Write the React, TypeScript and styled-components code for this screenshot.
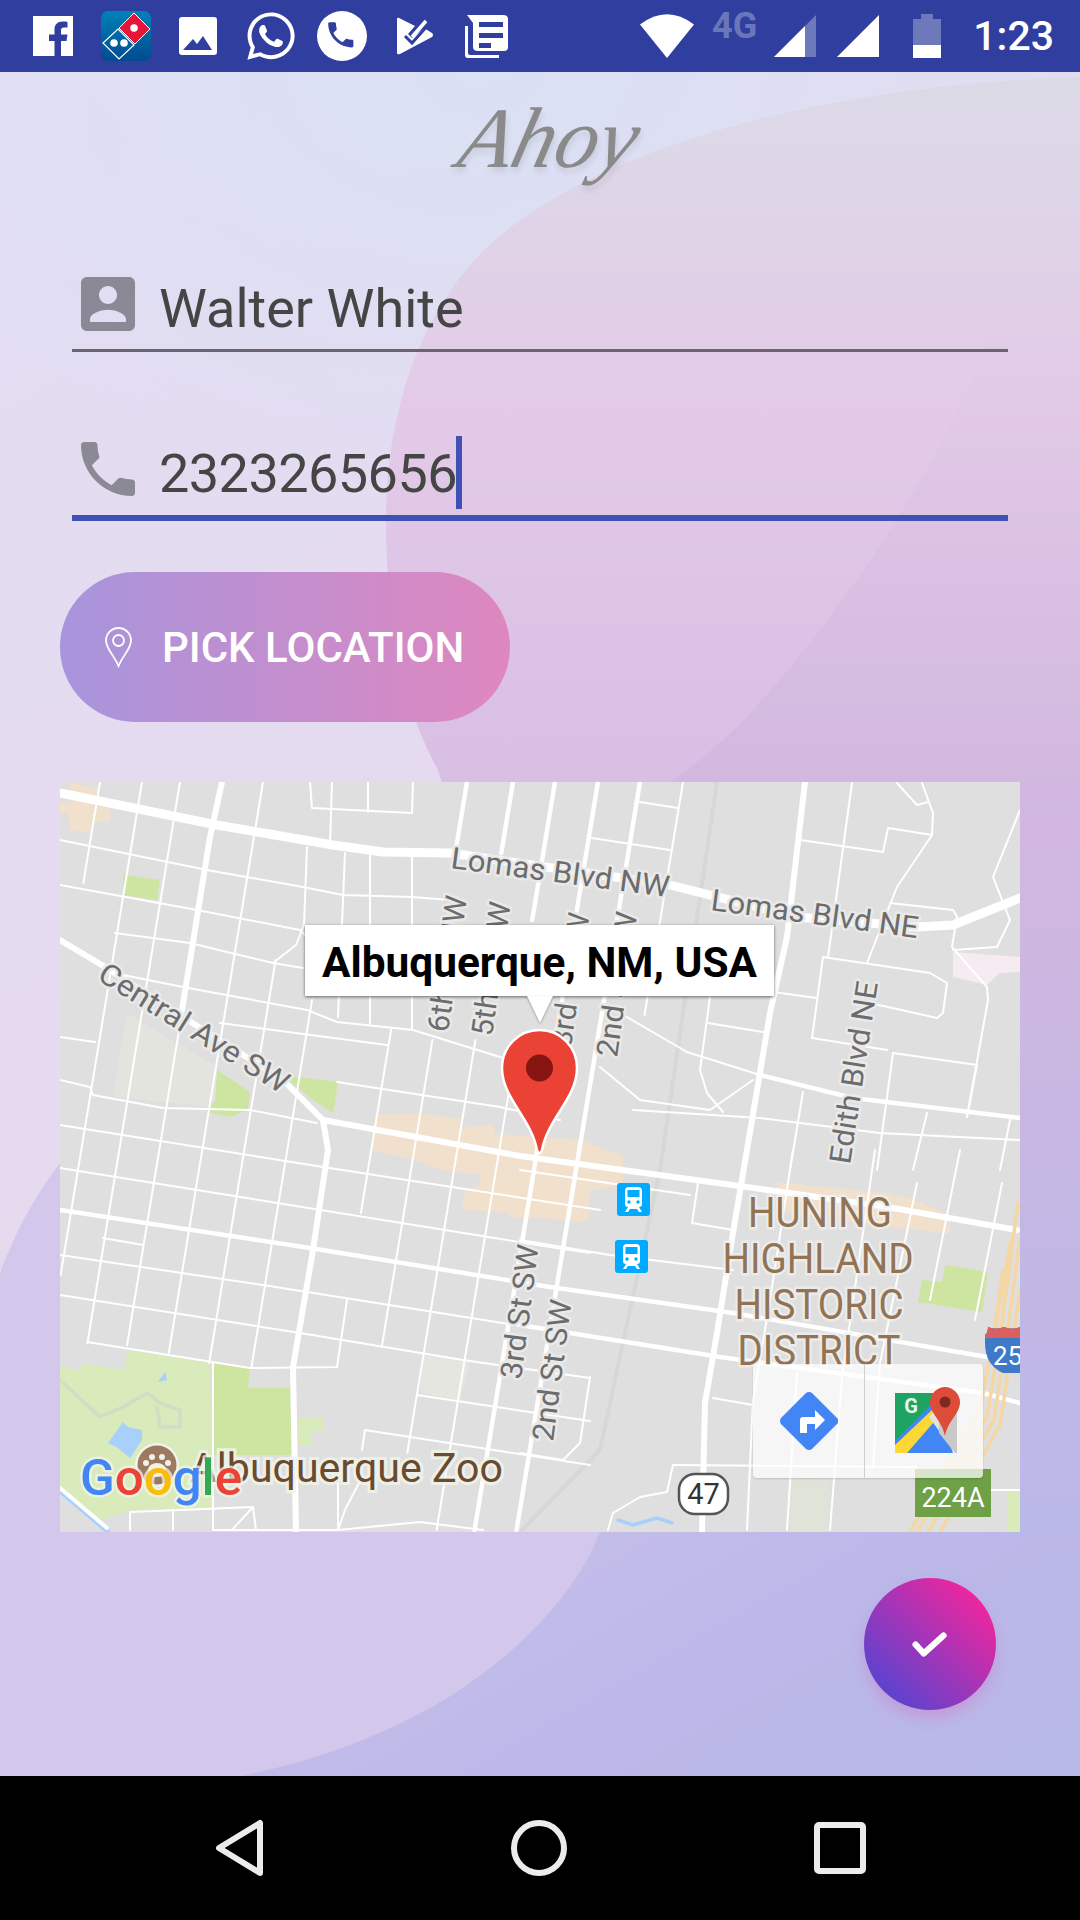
import React from "react";
import styled, { createGlobalStyle } from "styled-components";
import { FaWhatsapp } from "react-icons/fa";

const GlobalStyle = createGlobalStyle`
  html, body { margin: 0; padding: 0; background: #000; }
  * { box-sizing: border-box; }
`;

const BAR_BLUE = "#303f9f";

const Page = styled.div`
  width: 1080px;
  height: 1920px;
  display: flex;
  flex-direction: column;
  overflow: hidden;
  font-family: Roboto, "Liberation Sans", sans-serif;
`;

const StatusBar = styled.div`
  height: 72px;
  flex: none;
  display: flex;
  align-items: center;
  justify-content: space-between;
  background: ${BAR_BLUE};
  padding: 0 26px 0 33px;
  color: #fff;
`;

const StatusGroup = styled.div`
  display: flex;
  align-items: center;
`;

const StatusSlot = styled.span<{ $gap: number }>`
  display: flex;
  margin-left: ${(p) => p.$gap}px;
`;

const NetworkLabel = styled.span`
  font-size: 36px;
  font-weight: 700;
  line-height: 36px;
  color: rgba(255, 255, 255, 0.3);
  margin: -20px 0 0 18px;
`;

const Clock = styled.span`
  font-size: 41px;
  font-weight: 500;
  line-height: 44px;
  margin-left: 32px;
`;

const Screen = styled.main`
  position: relative;
  flex: 1;
  display: flex;
  flex-direction: column;
  padding: 0 60px;
  background:
    radial-gradient(ellipse 620px 420px at 480px 0, #dae1f4 0%, rgba(218, 225, 244, 0) 100%),
    linear-gradient(150deg, #e1def3 0%, #e6daef 50%, #ccc2e9 68%, #bcb8e9 86%, #b8b8e8 100%);
`;

const Backdrop = styled.svg`
  position: absolute;
  left: 0;
  top: 0;
  width: 1080px;
  height: 1704px;
`;

const TitleBox = styled.div`
  position: relative;
  height: 198px;
  flex: none;
  display: flex;
  justify-content: center;
  padding-top: 14px;
`;

const Title = styled.div`
  font-family: "Liberation Serif", serif;
  font-style: italic;
  font-size: 86px;
  line-height: 104px;
  color: #8a8a8a;
  transform: skewX(-14deg);
  text-shadow: 2px 5px 6px rgba(0, 0, 0, 0.1);
`;

const Field = styled.div<{ $focused?: boolean }>`
  position: relative;
  flex: none;
  display: flex;
  align-items: center;
  margin: ${(p) => (p.$focused ? "83px 12px 0" : "0 12px")};
  height: ${(p) => (p.$focused ? 86 : 82)}px;
  padding-left: 9px;
  border-bottom: ${(p) => (p.$focused ? "6px solid #3f51b5" : "3px solid #6b6470")};
`;

const FieldIcon = styled.svg`
  width: 54px;
  height: 54px;
  flex: none;
  fill: #8b8996;
  margin-top: -12px;
`;

const FieldText = styled.span<{ $tight?: boolean }>`
  font-size: 54px;
  line-height: 60px;
  color: #454545;
  letter-spacing: ${(p) => (p.$tight ? "-0.55px" : "normal")};
  margin: -2px 0 0 24px;
`;

const Caret = styled.span`
  width: 6px;
  height: 73px;
  flex: none;
  background: #3f51b5;
  margin: -6px 0 0 -1px;
`;

const PickButton = styled.button`
  position: relative;
  flex: none;
  width: 450px;
  height: 150px;
  margin-top: 51px;
  padding: 0 0 0 45px;
  display: flex;
  align-items: center;
  gap: 30px;
  border: 0;
  border-radius: 75px;
  background: linear-gradient(90deg, #a795dd 0%, #df87bf 100%);
  color: #fff;
  font-family: inherit;
  font-size: 42px;
  font-weight: 500;
`;

const MapBox = styled.div`
  position: relative;
  flex: none;
  width: 960px;
  height: 750px;
  margin-top: 60px;
  overflow: hidden;
  background: #dfdfdf;
`;

const MapCanvas = styled.svg`
  display: block;
  width: 960px;
  height: 750px;
  font-family: Roboto, sans-serif;
`;

const RoadLabel = styled.text`
  font-size: 30px;
  fill: #6c6c6c;
  stroke: #e9e9e9;
  stroke-width: 5px;
  paint-order: stroke;
  stroke-linejoin: round;
`;

const DistrictLabel = styled.text`
  font-size: 42px;
  fill: #927455;
  stroke: rgba(240, 240, 240, 0.75);
  stroke-width: 5px;
  paint-order: stroke;
  text-anchor: middle;
`;

const ZooLabel = styled.text`
  font-size: 40px;
  fill: #6b4a2f;
  stroke: rgba(240, 244, 232, 0.85);
  stroke-width: 6px;
  paint-order: stroke;
`;

const GoogleMark = styled.text`
  font-size: 50px;
  font-weight: 500;
  stroke: rgba(240, 244, 232, 0.75);
  stroke-width: 5px;
  paint-order: stroke;
  stroke-linejoin: round;
`;

const InfoWindow = styled.div`
  position: absolute;
  left: 245px;
  top: 143px;
  width: 469px;
  height: 71px;
  padding-top: 3px;
  display: flex;
  align-items: center;
  justify-content: center;
  background: #fff;
  box-shadow: 0 1px 3px rgba(0, 0, 0, 0.55);
  color: #000;
  font-size: 42.4px;
  font-weight: 700;
  white-space: nowrap;

  &::after {
    content: "";
    position: absolute;
    left: 222px;
    top: 71px;
    border-style: solid;
    border-width: 27px 13px 0;
    border-color: #fff transparent transparent;
    filter: drop-shadow(0 1px 1px rgba(0, 0, 0, 0.35));
  }
`;

const MapToolbar = styled.div`
  position: absolute;
  right: 37px;
  bottom: 54px;
  width: 230px;
  height: 114px;
  display: flex;
  border-radius: 4px;
  background: rgba(255, 255, 255, 0.72);
  box-shadow: 0 1px 2px rgba(0, 0, 0, 0.15);
`;

const ToolbarCell = styled.div`
  flex: 1;
  display: flex;
  align-items: center;
  justify-content: center;
  overflow: visible;

  & + & {
    border-left: 1px solid #d0d0d0;
    padding: 2px 0 0 7px;
  }
`;

const Fab = styled.button`
  align-self: flex-end;
  flex: none;
  width: 132px;
  height: 132px;
  margin: 46px 24px 0 0;
  padding: 0;
  border: 0;
  border-radius: 50%;
  display: flex;
  align-items: center;
  justify-content: center;
  background: linear-gradient(45deg, #5345d2 10%, #f1259e 88%);
  box-shadow: 0 8px 14px rgba(214, 100, 190, 0.35);
`;

const NavBar = styled.nav`
  height: 144px;
  flex: none;
  display: flex;
  align-items: center;
  background: #000;
  padding-left: 214px;
  gap: 246px;
`;

// ---- map data, in screen coordinates (the canvas viewBox starts at 60,782) ----

type Pt = [number, number];

const vLine = (x0: number, y1: number, y2: number): Pt[] => [
  [x0 - 0.165 * (y1 - 782), y1],
  [x0 - 0.165 * (y2 - 782), y2],
];

const toPoints = (pts: Pt[]) => pts.map((p) => p.join(",")).join(" ");

const thinRoads: Pt[][] = [
  vLine(100, 782, 883),
  vLine(142, 782, 1275),
  vLine(180, 782, 1343),
  vLine(220, 1010, 1345),
  vLine(263, 782, 1353),
  vLine(305, 960, 1363),
  vLine(348, 1000, 1368),
  vLine(432, 1030, 1213),
  vLine(475, 1040, 1347),
  vLine(518, 1040, 1453),
  vLine(560, 1040, 1530),
  vLine(683, 782, 1015),
  [[307, 847], [304, 925], [296, 945], [273, 963]],
  [[332, 782], [330, 845]],
  [[368, 782], [368, 812]],
  [[413, 782], [412, 813]],
  [[345, 853], [338, 1017]],
  [[370, 853], [370, 1023]],
  [[412, 853], [412, 1030]],
  [[310, 782], [312, 808], [412, 813]],
  [[60, 840], [207, 870], [303, 887], [343, 895], [412, 897], [450, 900]],
  [[60, 885], [197, 910], [300, 930], [305, 935]],
  [[115, 933], [190, 943], [273, 963], [303, 968]],
  [[113, 973], [183, 987], [307, 1010], [337, 1022], [413, 1030], [500, 1057], [540, 1068]],
  [[220, 1023], [387, 1045]],
  [[60, 1037], [95, 1042]],
  [[60, 1080], [90, 1087], [93, 1095], [163, 1108], [250, 1110], [317, 1123]],
  [[337, 1082], [500, 1107], [560, 1120]],
  [[60, 1125], [323, 1167], [600, 1210]],
  [[60, 1168], [550, 1247], [590, 1253]],
  [[103, 1238], [143, 1245]],
  [[60, 1255], [263, 1285], [440, 1313], [590, 1337]],
  [[60, 1295], [300, 1333], [463, 1360], [590, 1378]],
  [[87, 1342], [250, 1368], [337, 1367], [347, 1300]],
  [[417, 1395], [590, 1421]],
  [[365, 1430], [590, 1465]],
  [[365, 1430], [362, 1450]],
  [[213, 1363], [213, 1530]],
  [[130, 1512], [130, 1530]],
  [[130, 1512], [253, 1507], [232, 1530]],
  [[173, 1510], [173, 1530]],
  [[253, 1507], [256, 1530]],
  [[338, 1483], [338, 1530], [345, 1510], [362, 1477]],
  [[213, 1530], [338, 1530], [420, 1522], [483, 1530]],
  [[592, 838], [670, 850]],
  [[640, 802], [678, 808]],
  [[800, 840], [883, 852], [888, 828], [932, 835], [933, 813], [922, 783]],
  [[897, 783], [917, 805], [928, 802]],
  [[852, 783], [828, 957]],
  [[890, 903], [953, 910], [957, 917], [952, 947], [987, 987], [988, 1000], [967, 1117]],
  [[823, 957], [930, 973], [947, 983], [943, 1013], [937, 1018], [870, 1003]],
  [[823, 957], [812, 1038], [887, 1050]],
  [[893, 1053], [977, 1065], [967, 1117]],
  [[893, 1053], [877, 1170]],
  [[932, 835], [897, 887], [867, 963]],
  [[773, 992], [817, 998]],
  [[710, 997], [700, 1070], [707, 1093], [723, 1112]],
  [[708, 1023], [763, 1032]],
  [[620, 1013], [687, 1052], [760, 1075]],
  [[600, 1067], [640, 1100], [710, 1110], [753, 1080]],
  [[633, 1110], [760, 1118], [880, 1133], [1020, 1140]],
  [[803, 1092], [790, 1170]],
  [[927, 1113], [913, 1170]],
  [[1010, 1120], [1000, 1170]],
  [[1020, 810], [993, 877], [1010, 920], [997, 947], [953, 950]],
  [[793, 1150], [770, 1300], [753, 1400], [747, 1530]],
  [[875, 1150], [842, 1377], [830, 1530]],
  [[917, 1183], [880, 1363], [873, 1467]],
  [[960, 1150], [930, 1300]],
  [[1002, 1183], [975, 1320]],
  [[797, 1373], [787, 1530]],
  [[698, 1183], [692, 1223], [733, 1230]],
  [[520, 1170], [690, 1195]],
  [[520, 1240], [610, 1255], [733, 1270]],
  [[713, 1398], [753, 1405]],
  [[673, 1465], [917, 1467]],
  [[673, 1465], [667, 1492], [640, 1497], [613, 1513], [608, 1530]],
  [[950, 1490], [1020, 1490]],
  [[590, 1377], [580, 1443], [563, 1460], [520, 1453]],
];

const mediumRoads: Pt[][] = [
  vLine(467, 782, 853),
  vLine(513, 782, 853),
  vLine(555, 782, 920),
  vLine(598, 782, 1530),
  vLine(640, 782, 1530),
  [[760, 1075], [853, 1098], [1020, 1118]],
  [[60, 1210], [310, 1248], [550, 1287], [733, 1313], [987, 1357], [1020, 1363]],
  [[520, 1325], [720, 1357], [983, 1393], [1020, 1403]],
];

const majorRoads: Pt[][] = [
  [[222, 782], [210, 837], [182, 1010]],
  [[60, 940], [110, 970], [183, 1017], [283, 1080], [323, 1120]],
  [[323, 1120], [520, 1156], [747, 1187], [887, 1207], [1017, 1230]],
  [[323, 1120], [328, 1150], [313, 1250], [293, 1367], [296, 1532]],
  [[805, 782], [787, 937], [770, 1013], [733, 1233], [717, 1333], [705, 1403], [702, 1532]],
];

const freewayLanes: Pt[][] = [
  [[1018, 1203], [1000, 1337], [987, 1417], [917, 1532]],
  [[1020, 1240], [1006, 1340], [994, 1420], [928, 1532]],
  [[1011, 1240], [992, 1345], [980, 1410], [910, 1532]],
  [[1020, 1290], [1012, 1345], [1000, 1425], [940, 1532]],
  [[1003, 1270], [993, 1340]],
];

const blocks: { fill: string; pts: Pt[] }[] = [
  { fill: "#f1e0cc", pts: [[70, 783], [98, 788], [93, 807], [110, 808], [109, 822], [92, 822], [90, 833], [70, 830], [68, 813], [60, 813], [60, 802], [70, 803]] },
  { fill: "#f1e0cc", pts: [[375, 1115], [418, 1113], [460, 1119], [460, 1128], [493, 1124], [495, 1134], [580, 1140], [623, 1156], [623, 1185], [590, 1190], [588, 1222], [540, 1218], [510, 1217], [510, 1213], [462, 1210], [465, 1190], [480, 1185], [480, 1175], [440, 1170], [415, 1160], [372, 1150]] },
  { fill: "#f1e0cc", pts: [[777, 1182], [887, 1193], [910, 1198], [950, 1215], [950, 1233], [887, 1227], [777, 1210]] },
  { fill: "#f5ebf0", pts: [[953, 952], [1020, 957], [1020, 972], [1000, 973], [987, 985], [953, 977]] },
  { fill: "#cee5a2", pts: [[123, 875], [160, 880], [157, 900], [123, 895]] },
  { fill: "#cee5a2", pts: [[217, 1070], [250, 1092], [248, 1110], [230, 1117], [207, 1112], [215, 1100]] },
  { fill: "#cee5a2", pts: [[283, 1075], [338, 1082], [333, 1113], [310, 1098]] },
  { fill: "#e3e4de", pts: [[127, 1013], [217, 1067], [215, 1100], [207, 1107], [173, 1103], [113, 1097]] },
  { fill: "#cee5a2", pts: [[945, 1265], [988, 1272], [982, 1312], [918, 1302], [922, 1280], [942, 1282]] },
  { fill: "#d9eabb", pts: [[60, 1367], [80, 1370], [83, 1363], [125, 1370], [127, 1350], [210, 1363], [213, 1508], [133, 1510], [100, 1520], [60, 1490]] },
  { fill: "#cee5a2", pts: [[213, 1363], [250, 1368], [248, 1388], [290, 1388], [292, 1455], [213, 1455]] },
  { fill: "#d9eabb", pts: [[298, 1418], [323, 1418], [323, 1432], [312, 1432], [312, 1445], [297, 1445]] },
  { fill: "#e5e6df", pts: [[423, 1355], [470, 1362], [460, 1400], [420, 1393]] },
  { fill: "#e0e3d8", pts: [[790, 1478], [830, 1480], [828, 1532], [790, 1532]] },
  { fill: "#d9eabb", pts: [[1007, 1492], [1020, 1492], [1020, 1532], [1007, 1532]] },
  { fill: "#a9d0fb", pts: [[108, 1443], [123, 1422], [128, 1427], [142, 1430], [142, 1440], [130, 1458], [118, 1448]] },
  { fill: "#a9d0fb", pts: [[158, 1382], [165, 1372], [167, 1380]] },
];

function Transit({ x, y }: { x: number; y: number }) {
  return (
    <g transform={`translate(${x} ${y})`}>
      <rect width="33" height="33" rx="3" fill="#00aaff" />
      <path d="M8 8q0-4 4-4h9q4 0 4 4v13q0 3-3 3H11q-3 0-3-3z" fill="#fff" />
      <rect x="10.5" y="7" width="12" height="7" fill="#00aaff" />
      <circle cx="12" cy="19" r="1.7" fill="#00aaff" />
      <circle cx="21" cy="19" r="1.7" fill="#00aaff" />
      <path d="M11 24l-3 5h3l2-3h7l2 3h3l-3-5z" fill="#fff" />
    </g>
  );
}

function MapDrawing() {
  return (
    <MapCanvas viewBox="60 782 960 750">
      <rect x="60" y="782" width="960" height="750" fill="#dfdfdf" />
      {blocks.map((b, i) => (
        <polygon key={i} points={toPoints(b.pts)} fill={b.fill} />
      ))}
      <g fill="none" strokeLinejoin="round" strokeLinecap="round">
        <polyline points="60,1380 100,1417 123,1407 147,1393 160,1403 180,1410 180,1427 160,1427 157,1407" stroke="#d3dcc4" strokeWidth="3.5" />
        <polyline points="618,1520 633,1525 657,1518 672,1523" stroke="#a9d0fb" strokeWidth="3.5" />
        <polyline points="717,782 660,1170 600,1450 520,1532" stroke="#d7d7d7" strokeWidth="4" />
        {thinRoads.map((r, i) => (
          <polyline key={i} points={toPoints(r)} stroke="#fff" strokeWidth="2" />
        ))}
        <polyline points="60,1490 107,1530" stroke="#a9d0fb" strokeWidth="6" />
        <polyline points="60,1488 107,1528" stroke="#fff" strokeWidth="4" />
        {mediumRoads.map((r, i) => (
          <polyline key={i} points={toPoints(r)} stroke="#fff" strokeWidth="4.5" />
        ))}
        {majorRoads.map((r, i) => (
          <polyline key={i} points={toPoints(r)} stroke="#fff" strokeWidth="6" />
        ))}
        <polyline points="60,793 217,825 333,845 383,852 450,853 670,885 797,917 917,927 953,925 1020,898" stroke="#fff" strokeWidth="9" />
        {freewayLanes.map((r, i) => (
          <polyline key={i} points={toPoints(r)} stroke="#f5d7a4" strokeWidth="3.5" />
        ))}
      </g>

      <RoadLabel x="450" y="868" textLength="220" lengthAdjust="spacingAndGlyphs" transform="rotate(7.6 450 868)">Lomas Blvd NW</RoadLabel>
      <RoadLabel x="710" y="910" textLength="209" lengthAdjust="spacingAndGlyphs" transform="rotate(7.7 710 910)">Lomas Blvd NE</RoadLabel>
      <RoadLabel x="96" y="979" textLength="218" lengthAdjust="spacingAndGlyphs" transform="rotate(31.9 96 979)">Central Ave SW</RoadLabel>
      <RoadLabel x="448" y="1033" textLength="137" lengthAdjust="spacingAndGlyphs" transform="rotate(-82 448 1033)">6th St NW</RoadLabel>
      <RoadLabel x="492" y="1037" textLength="135" lengthAdjust="spacingAndGlyphs" transform="rotate(-82 492 1037)">5th St NW</RoadLabel>
      <RoadLabel x="571" y="1048" textLength="135" lengthAdjust="spacingAndGlyphs" transform="rotate(-82 571 1048)">3rd St NW</RoadLabel>
      <RoadLabel x="617" y="1058" textLength="146" lengthAdjust="spacingAndGlyphs" transform="rotate(-82 617 1058)">2nd St NW</RoadLabel>
      <RoadLabel x="850" y="1165" textLength="184" lengthAdjust="spacingAndGlyphs" transform="rotate(-81.3 850 1165)">Edith Blvd NE</RoadLabel>
      <RoadLabel x="521" y="1380" textLength="135" lengthAdjust="spacingAndGlyphs" transform="rotate(-82.5 521 1380)">3rd St SW</RoadLabel>
      <RoadLabel x="553" y="1442" textLength="142" lengthAdjust="spacingAndGlyphs" transform="rotate(-82.5 553 1442)">2nd St SW</RoadLabel>

      <DistrictLabel x="820" y="1227" textLength="144" lengthAdjust="spacingAndGlyphs">HUNING</DistrictLabel>
      <DistrictLabel x="818" y="1273" textLength="191" lengthAdjust="spacingAndGlyphs">HIGHLAND</DistrictLabel>
      <DistrictLabel x="819" y="1319" textLength="169" lengthAdjust="spacingAndGlyphs">HISTORIC</DistrictLabel>
      <DistrictLabel x="819" y="1365" textLength="163" lengthAdjust="spacingAndGlyphs">DISTRICT</DistrictLabel>

      <Transit x={617} y={1183} />
      <Transit x={615} y={1240} />

      <rect x="679" y="1474" width="49" height="40" rx="16" fill="#fff" stroke="#555" strokeWidth="2.5" />
      <text x="703.5" y="1504" fontSize="29" fill="#333" textAnchor="middle">47</text>

      <path d="M985 1335q3-3 3-8 8 3 16 0 8 3 16 0v46q-8 0-17 0-18-8-18-30z" fill="#3f7ac9" />
      <path d="M985 1335q3-3 3-8 8 3 16 0 8 3 16 0v11h-35z" fill="#d8605f" />
      <text x="993" y="1365" fontSize="26" fill="#fff">25</text>

      <rect x="915" y="1469" width="76" height="48" fill="#6ea046" />
      <text x="953" y="1507" fontSize="27" fill="#fff" textAnchor="middle">224A</text>

      <ZooLabel x="190" y="1482" textLength="313" lengthAdjust="spacingAndGlyphs">Albuquerque Zoo</ZooLabel>
      <circle cx="157" cy="1465" r="22" fill="#f2f4ec" />
      <circle cx="157" cy="1465" r="19.5" fill="#9b7a60" />
      <g fill="#f4efe9">
        <ellipse cx="157" cy="1470" rx="9" ry="7" />
        <circle cx="146" cy="1463" r="3" />
        <circle cx="152" cy="1457" r="3" />
        <circle cx="162" cy="1457" r="3" />
        <circle cx="168" cy="1463" r="3" />
      </g>
      <GoogleMark x="80" y="1495" textLength="162" lengthAdjust="spacingAndGlyphs">
        <tspan fill="#4285f4">G</tspan>
        <tspan fill="#ea4335">o</tspan>
        <tspan fill="#fbbc05">o</tspan>
        <tspan fill="#4285f4">g</tspan>
        <tspan fill="#34a853">l</tspan>
        <tspan fill="#ea4335">e</tspan>
      </GoogleMark>

      <path
        d="M539.5 1030C560.500 1030 577 1047 577 1068C577 1098 548 1118 542 1150Q539.500 1156 537 1150C531 1118 502 1098 502 1068C502 1047 518.500 1030 539.500 1030Z"
        fill="#ea4335"
        stroke="#fff"
        strokeWidth="2.5"
      />
      <circle cx="539.500" cy="1068" r="13.500" fill="#861512" />
    </MapCanvas>
  );
}

function FacebookIcon() {
  return (
    <svg width="40" height="40" viewBox="0 0 40 40">
      <path d="M0 0h40v40H28V25h5.500l1-6.500H28v-4c0-2 .8-3 3-3h3.500V6c-1-.2-3-.4-5-.4-5 0-8 3-8 8v4.900H16V25h5.500v15H0z" fill="#fff" />
    </svg>
  );
}

function DominosIcon() {
  return (
    <svg width="50" height="50" viewBox="0 0 50 50">
      <defs>
        <linearGradient id="dominosBg" x1="0" y1="0" x2="0" y2="1">
          <stop offset="0" stopColor="#0082b8" />
          <stop offset="1" stopColor="#004b90" />
        </linearGradient>
      </defs>
      <rect width="50" height="50" rx="7" fill="url(#dominosBg)" />
      <path d="M33 2l16 16-15 15-16-16z" fill="#e8153a" stroke="#fff" strokeWidth="1" />
      <path d="M17 18l16 16-15 14L2 32z" fill="none" stroke="#fff" strokeWidth="1.200" />
      <circle cx="33" cy="17" r="3.800" fill="#fff" />
      <circle cx="13" cy="32" r="3.800" fill="#fff" />
      <circle cx="23" cy="32" r="3.800" fill="#fff" />
    </svg>
  );
}

function GalleryIcon() {
  return (
    <svg width="38" height="38" viewBox="0 0 38 38">
      <path d="M3 0h32q3 0 3 3v32q0 3-3 3H3q-3 0-3-3V3q0-3 3-3zM4 33h29l-9-14-6 8-4-5z" fill="#fff" fillRule="evenodd" />
    </svg>
  );
}

function PhoneBubbleIcon() {
  return (
    <svg width="50" height="50" viewBox="0 0 50 50">
      <circle cx="25" cy="25" r="25" fill="#fff" />
      <path
        transform="translate(7 7) scale(1.400)"
        d="M6.620 10.790c1.440 2.830 3.760 5.140 6.590 6.590l2.200-2.200c.27-.27.67-.36 1.020-.24 1.120.37 2.330.57 3.570.57.55 0 1 .45 1 1V20c0 .55-.45 1-1 1-9.390 0-17-7.610-17-17 0-.55.45-1 1-1h3.500c.55 0 1 .45 1 1 0 1.250.2 2.450.57 3.570.11.35.03.74-.25 1.020l-2.200 2.200z"
        fill={BAR_BLUE}
      />
    </svg>
  );
}

function TasksIcon() {
  return (
    <svg width="36" height="38" viewBox="0 0 36 38">
      <path d="M0 2q0-2 2-1l16 8-7 8 4 4L27 11l8 5q2 2 0 4L3 37q-3 1-3-1z" fill="#fff" />
      <path d="M8 19l7 7 17-19" fill="none" stroke={BAR_BLUE} strokeWidth="3" />
      <path d="M15 20L29 4" fill="none" stroke="#fff" strokeWidth="3.500" />
    </svg>
  );
}

function NewsIcon() {
  return (
    <svg width="43" height="43" viewBox="0 0 43 43">
      <path d="M2 0h36q5 0 5 4v28q0 4-4 4H13q-5 0-5-4V8zM14 7v5h24V7zm0 11v5h24v-5zm0 10v5h12v-5z" fill="#fff" fillRule="evenodd" />
      <path d="M0 11h3v27q0 2 2 2h29v3H3q-3 0-3-3z" fill="#fff" />
    </svg>
  );
}

function App() {
  return (
    <Page>
      <GlobalStyle />
      <StatusBar>
        <StatusGroup>
          <FacebookIcon />
          <StatusSlot $gap={28}><DominosIcon /></StatusSlot>
          <StatusSlot $gap={28}><GalleryIcon /></StatusSlot>
          <StatusSlot $gap={27}><FaWhatsapp size={54} color="#fff" /></StatusSlot>
          <StatusSlot $gap={19}><PhoneBubbleIcon /></StatusSlot>
          <StatusSlot $gap={30}><TasksIcon /></StatusSlot>
          <StatusSlot $gap={32}><NewsIcon /></StatusSlot>
        </StatusGroup>
        <StatusGroup>
          <svg width="54" height="44" viewBox="0 0 54 44">
            <path d="M0 10.500Q27-10 54 10.500L27 44z" fill="#fff" />
          </svg>
          <NetworkLabel>4G</NetworkLabel>
          <StatusSlot $gap={17}>
            <svg width="42" height="42" viewBox="0 0 42 42">
              <path d="M0 42L42 0v42z" fill="#fff" fillOpacity="0.3" />
              <path d="M0 42L31 11v31z" fill="#fff" />
            </svg>
          </StatusSlot>
          <StatusSlot $gap={21}>
            <svg width="42" height="42" viewBox="0 0 42 42">
              <path d="M0 42L42 0v42z" fill="#fff" />
            </svg>
          </StatusSlot>
          <StatusSlot $gap={34}>
            <svg width="28" height="44" viewBox="0 0 28 44">
              <path d="M0 5h8V0h12v5h8v27H0z" fill="#fff" fillOpacity="0.3" />
              <path d="M0 31h28v13H0z" fill="#fff" />
            </svg>
          </StatusSlot>
          <Clock>1:23</Clock>
        </StatusGroup>
      </StatusBar>

      <Screen>
        <Backdrop viewBox="0 72 1080 1704">
          <defs>
            <linearGradient id="pinkBlob" x1="0" y1="77" x2="0" y2="1532" gradientUnits="userSpaceOnUse">
              <stop offset="0" stopColor="#dcdae7" />
              <stop offset="0.22" stopColor="#e3cbe8" />
              <stop offset="0.5" stopColor="#d8bee3" />
              <stop offset="0.8" stopColor="#c4b9e6" />
              <stop offset="1" stopColor="#bab8e8" />
            </linearGradient>
            <linearGradient id="pinkShade" x1="0" y1="300" x2="0" y2="1500" gradientUnits="userSpaceOnUse">
              <stop offset="0" stopColor="#b79ccf" stopOpacity="0" />
              <stop offset="0.42" stopColor="#b79ccf" stopOpacity="0.2" />
              <stop offset="1" stopColor="#b79ccf" stopOpacity="0" />
            </linearGradient>
          </defs>
          <path d="M1080 77C800 85 560 160 470 265C410 335 386 430 386 520C386 640 410 720 438 770C480 900 560 1300 600 1532L1080 1532Z" fill="url(#pinkBlob)" />
          <path d="M1000 300C970 430 820 650 723 740C700 760 680 775 660 790L660 1500L1080 1500L1080 300Z" fill="url(#pinkShade)" />
          <path d="M600 1532C570 1610 482 1690 379 1733C330 1755 280 1768 241 1776L0 1776L0 1273C20 1220 40 1190 60 1163L300 1140C430 1240 560 1400 600 1532Z" fill="#d3c8eb" />
        </Backdrop>

        <TitleBox>
          <Title>Ahoy</Title>
        </TitleBox>

        <Field>
          <FieldIcon viewBox="3 3 18 18">
            <path d="M3 5v14c0 1.100.89 2 2 2h14c1.100 0 2-.9 2-2V5c0-1.100-.9-2-2-2H5c-1.110 0-2 .9-2 2zm12 4c0 1.660-1.340 3-3 3s-3-1.340-3-3 1.340-3 3-3 3 1.340 3 3zm-9 8c0-2 4-3.100 6-3.100s6 1.100 6 3.100v1H6v-1z" />
          </FieldIcon>
          <FieldText>Walter White</FieldText>
        </Field>

        <Field $focused>
          <FieldIcon viewBox="3 3 18 18">
            <path d="M6.620 10.790c1.440 2.830 3.760 5.140 6.590 6.590l2.200-2.200c.27-.27.67-.36 1.020-.24 1.120.37 2.330.57 3.570.57.55 0 1 .45 1 1V20c0 .55-.45 1-1 1-9.390 0-17-7.610-17-17 0-.55.45-1 1-1h3.500c.55 0 1 .45 1 1 0 1.250.2 2.450.57 3.570.11.35.03.74-.25 1.020l-2.200 2.200z" />
          </FieldIcon>
          <FieldText $tight>2323265656</FieldText>
          <Caret />
        </Field>

        <PickButton>
          <svg width="27" height="41" viewBox="0 0 27 41" fill="none" stroke="#fff" strokeWidth="1.800">
            <path d="M13.500 39C9 28 1 22 1 13.500a12.500 12.500 0 0 1 25 0C26 22 18 28 13.500 39z" />
            <circle cx="13.500" cy="13.500" r="5.500" />
          </svg>
          PICK LOCATION
        </PickButton>

        <MapBox>
          <MapDrawing />
          <InfoWindow>Albuquerque, NM, USA</InfoWindow>
          <MapToolbar>
            <ToolbarCell>
              <svg width="58" height="58" viewBox="0 0 58 58">
                <path d="M29 0q2 0 3 1l25 25q3 3 0 6L32 57q-3 2-6 0L1 32q-2-3 0-6L26 1q1-1 3-1z" fill="#4285f4" />
                <path d="M20 41V28q0-3 3-3h12v-7l10 10-10 10v-6H27v9z" fill="#fff" />
              </svg>
            </ToolbarCell>
            <ToolbarCell>
              <svg width="70" height="70" viewBox="0 0 70 70">
                <path d="M2 6h50v60H5q-3 0-3-3z" fill="#1da462" />
                <path d="M2 66V54L42 14 60 66z" fill="#4285f4" />
                <path d="M2 66V58L40 22 47 28 14 66z" fill="#fdd835" />
                <path d="M36 30l8-8 20 32v12h-2z" fill="#e2e2e2" />
                <path d="M46 22l18 0v44h-2L46 46z" fill="#c9c9c9" />
                <text x="18" y="26" fontSize="20" fontWeight="700" fill="#e8f5ee" textAnchor="middle" fontFamily="Roboto">G</text>
                <path d="M52 0c8 0 15 7 15 15 0 12-12 18-15 34-3-16-15-22-15-34C37 7 44 0 52 0z" fill="#dd4b39" />
                <circle cx="52" cy="15" r="5.500" fill="#7e2a20" />
              </svg>
            </ToolbarCell>
          </MapToolbar>
        </MapBox>

        <Fab aria-label="Done">
          <svg width="36" height="27" viewBox="0 0 40 30" fill="none" stroke="#fff" strokeWidth="7" strokeLinecap="round" strokeLinejoin="round">
            <path d="M4 15l9 10L35 5" />
          </svg>
        </Fab>
      </Screen>

      <NavBar>
        <svg width="50" height="58" viewBox="0 0 50 58" fill="none" stroke="#ececec" strokeWidth="6" strokeLinejoin="round">
          <path d="M46 4v50L5 29z" />
        </svg>
        <svg width="58" height="58" viewBox="0 0 58 58" fill="none" stroke="#ececec" strokeWidth="6">
          <circle cx="29" cy="29" r="25" />
        </svg>
        <svg width="52" height="52" viewBox="0 0 52 52" fill="none" stroke="#ececec" strokeWidth="6">
          <rect x="3" y="3" width="46" height="46" rx="2" />
        </svg>
      </NavBar>
    </Page>
  );
}

export default App;
